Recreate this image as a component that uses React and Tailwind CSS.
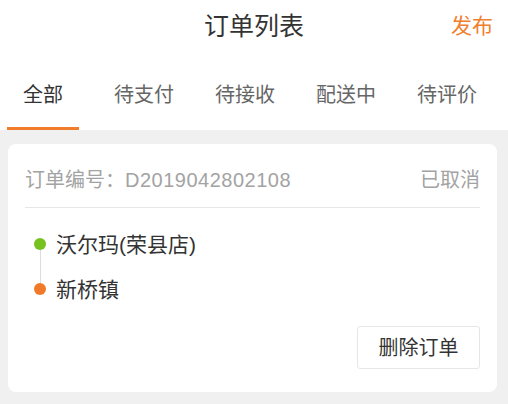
import React from 'react';

const FONT = { fontFamily: '"Liberation Sans", "Noto Sans CJK SC", sans-serif' };

const tabs = ['全部', '待支付', '待接收', '配送中', '待评价'];

const App = () => {
    return (
        <div className="w-[508px] h-[404px] bg-[#f0f0f0] flex flex-col overflow-hidden" style={FONT}>
            {/* header */}
            <div className="bg-white">
                <div className="h-[52px] grid grid-cols-[1fr_auto_1fr] items-center">
                    <div />
                    <h1 className="text-[25px] leading-[30px] text-[#333333] font-normal">订单列表</h1>
                    <div className="flex justify-end pr-[15px]">
                        <button className="text-[21px] leading-[28px] text-[#f0802f]">发布</button>
                    </div>
                </div>

                {/* tabs */}
                <div className="flex h-[78px] pl-[7px] gap-[29px]">
                    {tabs.map((t, i) => (
                        <div
                            key={t}
                            className={
                                i === 0
                                    ? 'w-[72px] h-full pt-[29px] text-center text-[20px] leading-[28px] text-[#333333] border-b-[3px] border-[#f07c2c]'
                                    : 'w-[72px] h-full pt-[29px] text-center text-[20px] leading-[28px] text-[#666666]'
                            }
                        >
                            {t}
                        </div>
                    ))}
                </div>
            </div>

            {/* list */}
            <div className="pt-[14px] pl-[8px]">
                <div className="w-[489px] bg-white rounded-[8px] px-[17px] pb-[23px]">
                    <div className="flex justify-between pt-[22px] pb-[13px] border-b border-[#e6e6e6] text-[20px] leading-[28px] text-[#a3a3a3]">
                        <span>
                            订单编号：<span className="tracking-[0.5px]">D2019042802108</span>
                        </span>
                        <span>已取消</span>
                    </div>

                    <div className="flex pt-[14px]">
                        <div className="flex flex-col items-center ml-[9px] w-[12px] pt-[16px]">
                            <div className="w-[12px] h-[12px] rounded-full bg-[#76c21e]" />
                            <div className="w-px h-[33px] bg-[#dddddd]" />
                            <div className="w-[12px] h-[12px] rounded-full bg-[#f07a2a]" />
                        </div>
                        <div className="ml-[10px] flex flex-col text-[21px] text-[#333333]">
                            <div className="h-[45px] flex items-center">沃尔玛(荣县店)</div>
                            <div className="h-[45px] flex items-center">新桥镇</div>
                        </div>
                    </div>

                    <div className="flex justify-end mt-[14px]">
                        <button className="w-[123px] h-[43px] border border-[#e6e6e6] rounded-[3px] text-[20px] text-[#333333]">
                            删除订单
                        </button>
                    </div>
                </div>
            </div>
        </div>
    );
};

export default App;
